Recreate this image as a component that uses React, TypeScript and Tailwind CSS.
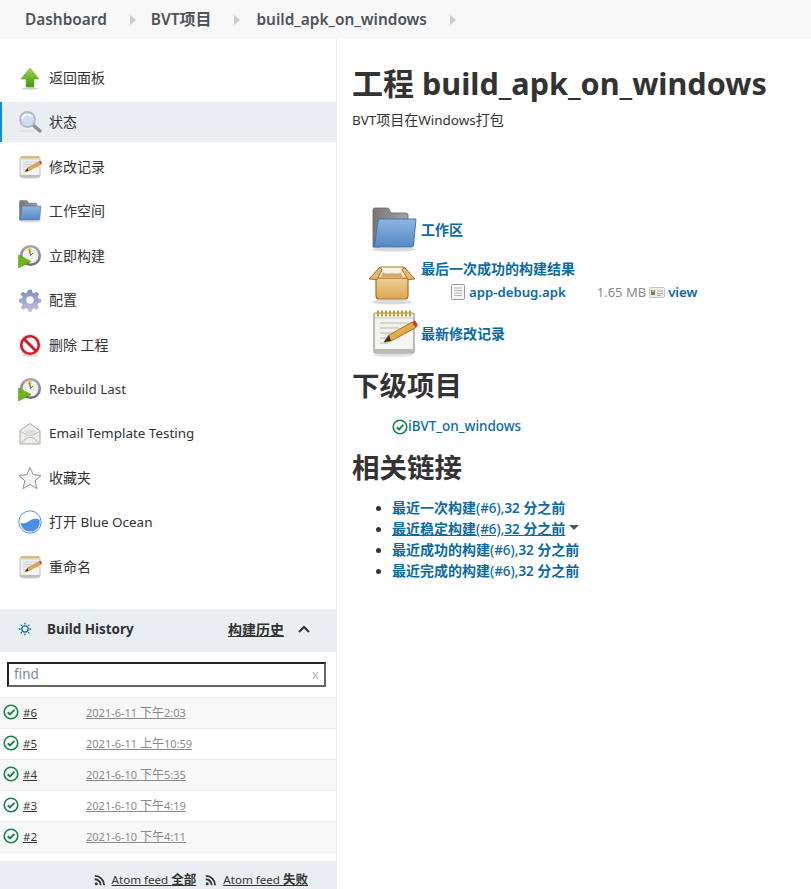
import React from "react";

const FONT = { fontFamily: '"Noto Sans","Noto Sans CJK SC",sans-serif' };

// Chinese runs are set at a slightly larger size than the Latin text around them.
function T({ s, cjk = "text-[14px]" }: { s: string; cjk?: string }) {
  const parts = s.split(/([\u4e00-\u9fff]+)/);
  return (
    <>
      {parts.map((p, i) => (i % 2 === 1 ? <span key={i} className={cjk}>{p}</span> : p))}
    </>
  );
}

function Arrow() {
  return (
    <svg viewBox="0 0 24 24" className="w-6 h-6">
      <defs><linearGradient id="ga" x1="0" y1="0" x2="0" y2="1"><stop offset="0" stopColor="#a5d25f" /><stop offset="1" stopColor="#3f9a06" /></linearGradient></defs>
      <ellipse cx="12" cy="22.5" rx="8" ry="1.2" fill="#ccc" />
      <path d="M12 2 L21 13 H16 V21 H8 V13 H3 Z" fill="url(#ga)" stroke="#6da82e" strokeWidth=".6" />
    </svg>
  );
}
function Search() {
  return (
    <svg viewBox="0 0 24 24" className="w-6 h-6">
      <ellipse cx="9" cy="21" rx="8" ry="1.5" fill="#e2e2e2" />
      <path d="M15 15 L22 21" stroke="#8d8f91" strokeWidth="3.4" strokeLinecap="round" />
      <circle cx="9.5" cy="9.5" r="7.5" fill="#cfdcf3" stroke="#b4b8bd" strokeWidth="1.8" />
      <path d="M4.5 9a5 5 0 0 1 9-2.5" stroke="#fff" strokeWidth="1.4" fill="none" />
    </svg>
  );
}
function Notepad({ size = 24 }: { size?: number }) {
  return (
    <svg viewBox="0 0 48 48" width={size} height={size}>
      <ellipse cx="24" cy="46" rx="20" ry="1.8" fill="#e2e2e2" />
      <rect x="4" y="4" width="40" height="40" rx="2" fill="#f3f3f0" stroke="#8a8a86" strokeWidth="1.1" />
      <rect x="4.5" y="40" width="39" height="3.6" fill="#b9b9b5" />
      <path d="M8 1.5v6M12 1.5v6M16 1.5v6M20 1.5v6M24 1.5v6M28 1.5v6M32 1.5v6M36 1.5v6M40 1.5v6" stroke="#bda12f" strokeWidth="2" />
      <rect x="5" y="8.5" width="38" height="1" fill="#c9c9c5" />
      <path d="M10 14h28M10 19h19M10 24h27M10 29h14M10 34h8" stroke="#b5b5b1" strokeWidth="1.2" />
      <path d="M14 33 L19 26 L42 13 L46 18.5 L21 32 Z" fill="#e5a94a" stroke="#8f6420" strokeWidth=".8" />
      <path d="M42 13 L46 18.5 L48 16 L45 11.5 Z" fill="#d8352a" />
      <path d="M14 33 L19 26 L21 32 Z" fill="#3c3026" />
    </svg>
  );
}
function Folder({ size = 24 }: { size?: number }) {
  const id = "gf" + size;
  return (
    <svg viewBox="0 0 48 48" width={size} height={size}>
      <defs>
        <linearGradient id={id} x1="0" y1="0" x2="0" y2="1"><stop offset="0" stopColor="#8fb5df" /><stop offset="1" stopColor="#5488c6" /></linearGradient>
        <linearGradient id={id + "b"} x1="0" y1="0" x2="1" y2="0"><stop offset="0" stopColor="#777" /><stop offset="1" stopColor="#a2a2a2" /></linearGradient>
      </defs>
      <ellipse cx="24" cy="44.5" rx="22" ry="2" fill="#d9d9d9" />
      <path d="M3 42 V5 Q3 3 5 3 H17 Q19 3 20 6 L21 8 H36 Q38 8 38 10 V16 L10 42 Z" fill={`url(#${id}b)`} stroke="#666" strokeWidth=".8" />
      <path d="M4 42 L8.5 14 H46 L43.5 41 Q43 42 41 42 Z" fill={`url(#${id})`} stroke="#3f6ea8" strokeWidth=".9" />
    </svg>
  );
}
function Clock({ uid }: { uid: string }) {
  return (
    <svg viewBox="0 0 24 24" className="w-6 h-6">
      <defs><linearGradient id={uid} x1="0" y1="0" x2="0" y2="1"><stop offset="0" stopColor="#aaa7ba" /><stop offset="1" stopColor="#6c6a80" /></linearGradient></defs>
      <circle cx="12.5" cy="11.5" r="10.6" fill={`url(#${uid})`} />
      <circle cx="12.5" cy="11.5" r="8" fill="#f3f1ea" />
      <path d="M12.5 11.5 L9 4.5 A8 8 0 0 1 14 3.7 Z" fill="#ecd166" />
      <path d="M12.5 11.5 L15 9 M12.5 11.5 L11.5 5.5" stroke="#555" strokeWidth=".9" />
      <path d="M0.5 11 L0.5 24 L13 17.5 Z" fill="#6cb61b" stroke="#4d8c10" strokeWidth=".5" />
    </svg>
  );
}
function Gear() {
  return (
    <svg viewBox="0 0 24 24" className="w-6 h-6">
      <defs><linearGradient id="gg" x1="0" y1="0" x2="0" y2="1"><stop offset="0" stopColor="#7a8dbc" /><stop offset="1" stopColor="#c4c1de" /></linearGradient></defs>
      <path d="M10 0.5h4l.6 3.3 2 .8 2.8-1.9 2.8 2.8-1.9 2.8.8 2 3 .6v4l-3 .6-.8 2 1.9 2.8-2.8 2.8-2.8-1.9-2 .8-.6 3h-4l-.6-3-2-.8-2.8 1.9-2.8-2.8 1.9-2.8-.8-2-3-.6v-4l3-.6.8-2L1.2 5.5 4 2.7l2.8 1.9 2-.8z" fill="url(#gg)" transform="translate(1.2 1.2) scale(.9)" />
      <circle cx="12" cy="12" r="3.8" fill="#fff" />
    </svg>
  );
}
function NoEntry() {
  return (
    <svg viewBox="0 0 24 24" className="w-6 h-6">
      <ellipse cx="12" cy="22.5" rx="8" ry="1.3" fill="#ddd" />
      <circle cx="12" cy="12" r="8.8" fill="#fff" stroke="#d01f26" strokeWidth="2.8" />
      <path d="M6 6 L18 18" stroke="#d01f26" strokeWidth="3" />
      <circle cx="12" cy="12" r="10.4" fill="none" stroke="#f0b0b0" strokeWidth=".5" />
    </svg>
  );
}
function Mail() {
  return (
    <svg viewBox="0 0 24 24" className="w-6 h-6">
      <path d="M2 8.5 L12 1.5 L22 8.5 V22 H2 Z" fill="#eeeeea" stroke="#a9a9a5" strokeWidth="1" />
      <path d="M2 9 L9 13 H15 L22 9" fill="none" stroke="#bdbdb9" strokeWidth="1" />
      <path d="M6 8 H18 L15 13 H9 Z" fill="#dcdcd8" />
      <path d="M2.5 21.5 L9 15.5 H15 L21.5 21.5" fill="none" stroke="#c3c3bf" strokeWidth="1.2" />
    </svg>
  );
}
function Star() {
  return (
    <svg viewBox="0 0 24 24" className="w-6 h-6">
      <path d="M12 1.5 L15.2 8.7 L23 9.5 L17.2 14.8 L18.9 22.6 L12 18.5 L5.1 22.6 L6.8 14.8 L1 9.5 L8.8 8.7 Z" fill="#f4f4f2" stroke="#8b8b8b" strokeWidth="1" strokeLinejoin="round" />
    </svg>
  );
}
function Ocean() {
  return (
    <svg viewBox="0 0 24 24" className="w-6 h-6">
      <circle cx="12" cy="12" r="11.2" fill="#fff" stroke="#5294e8" strokeWidth="1" />
      <path d="M2.6 12.5 C6 14.5 9 12.5 12 10.5 C15 8.5 18 8 21.4 9.5 A9.6 9.6 0 0 1 12 21.6 A9.6 9.6 0 0 1 2.6 12.5 Z" fill="#4a90e2" />
    </svg>
  );
}
function Box() {
  return (
    <svg viewBox="0 0 48 48" width="48" height="48">
      <defs><linearGradient id="gb" x1="0" y1="0" x2="0" y2="1"><stop offset="0" stopColor="#f0cf96" /><stop offset="1" stopColor="#dfa654" /></linearGradient></defs>
      <ellipse cx="24" cy="44" rx="20" ry="2.6" fill="#dadada" />
      <path d="M8 20 H40 V38 Q40 41 37 41 H11 Q8 41 8 38 Z" fill="url(#gb)" stroke="#a5701f" strokeWidth="1.2" />
      <path d="M12 9 H36 L44 20 H4 Z" fill="#fff3dc" stroke="#b07a2a" strokeWidth="1" />
      <path d="M12 9 L1 21 L9 21.5 L14 12 Z M36 9 L47 21 L40 21.5 L34 12 Z" fill="#e6b76e" stroke="#a5701f" strokeWidth="1" />
      <path d="M13 19 L16 12 H32 L35 19 Z" fill="#d9a862" />
      <ellipse cx="20" cy="13.5" rx="5" ry="2" fill="#f2f2ee" />
      <ellipse cx="28" cy="13.5" rx="5" ry="2" fill="#f2f2ee" />
    </svg>
  );
}
function Doc() {
  return (
    <svg viewBox="0 0 16 16" width="16" height="16">
      <rect x="1.5" y=".5" width="13" height="15" rx="1" fill="#f7f7f5" stroke="#9a9a9a" />
      <path d="M4 4h8M4 6.5h8M4 9h8M4 11.5h8" stroke="#b4b4b4" />
    </svg>
  );
}
function Card() {
  return (
    <svg viewBox="0 0 16 16" width="16" height="16">
      <rect x=".5" y="3.5" width="15" height="10" rx="1" fill="#ecece8" stroke="#c5c5c0" />
      <rect x="2" y="6" width="4" height="5" fill="#6f7f45" />
      <circle cx="4" cy="7" r="1.2" fill="#e0c090" />
      <path d="M8 7h6M8 9.5h6M8 11.5h4" stroke="#a8a8a4" />
    </svg>
  );
}
function Check({ size = 16 }: { size?: number }) {
  return (
    <svg viewBox="0 0 16 16" width={size} height={size} className="shrink-0">
      <circle cx="8" cy="8" r="6.8" fill="none" stroke="#138347" strokeWidth="1.6" />
      <path d="M4.7 8.2 L7 10.4 L11.4 5.9" fill="none" stroke="#138347" strokeWidth="2" />
    </svg>
  );
}
function Rss() {
  return (
    <svg viewBox="0 0 16 16" width="12" height="12" className="shrink-0">
      <circle cx="3" cy="13" r="2" fill="#333" />
      <path d="M1 7a8 8 0 0 1 8 8M1 2.5a12.5 12.5 0 0 1 12.5 12.5" fill="none" stroke="#333" strokeWidth="2.4" />
    </svg>
  );
}
function Tri() {
  return (
    <svg viewBox="0 0 6 10" width="6" height="10"><path d="M0 0 L6 5 L0 10 Z" fill="#c8ccce" /></svg>
  );
}

const tasks: [React.ReactNode, string, boolean?][] = [
  [<Arrow />, "返回面板"],
  [<Search />, "状态", true],
  [<Notepad />, "修改记录"],
  [<Folder />, "工作空间"],
  [<Clock uid="c1" />, "立即构建"],
  [<Gear />, "配置"],
  [<NoEntry />, "删除 工程"],
  [<Clock uid="c2" />, "Rebuild Last"],
  [<Mail />, "Email Template Testing"],
  [<Star />, "收藏夹"],
  [<Ocean />, "打开 Blue Ocean"],
  [<Notepad />, "重命名"],
];

const builds: [string, string][] = [
  ["#6", "2021-6-11 下午2:03"],
  ["#5", "2021-6-11 上午10:59"],
  ["#4", "2021-6-10 下午5:35"],
  ["#3", "2021-6-10 下午4:19"],
  ["#2", "2021-6-10 下午4:11"],
];

const links: [string, string, boolean?][] = [
  ["最近一次构建", "(#6),32 分之前"],
  ["最近稳定构建", "(#6),32 分之前", true],
  ["最近成功的构建", "(#6),32 分之前"],
  ["最近完成的构建", "(#6),32 分之前"],
];

export default function App() {
  return (
    <div style={FONT} className="w-[811px] h-[889px] overflow-hidden bg-white text-[#333] text-[13.45px] leading-[19px] flex flex-col">
      <nav className="h-[39px] shrink-0 bg-[#f8f8f8] flex items-center pl-[25px] text-[15.4px] font-semibold text-[#4d545d]">
        <span>Dashboard</span>
        <span className="ml-[23px] mr-[15px]"><Tri /></span>
        <span><T s="BVT项目" cjk="text-[16px]" /></span>
        <span className="ml-[23px] mr-[16px]"><Tri /></span>
        <span>build_apk_on_windows</span>
        <span className="ml-[23px]"><Tri /></span>
      </nav>
      <div className="flex flex-1 min-h-0">
        <aside className="w-[337px] shrink-0 border-r border-[#e9eef1] flex flex-col">
          <div className="pt-[19px] flex flex-col gap-[4.45px]">
            {tasks.map(([icon, label, active], i) => (
              <div key={i} className={`h-10 flex items-center pl-[16px] gap-[7px] border-l-2 text-[#333] ${active ? "bg-[#e9eef1] border-[#0b8de0]" : "border-transparent"}`}>
                <span className="w-6 h-6 shrink-0">{icon}</span>
                <span><T s={label} /></span>
              </div>
            ))}
          </div>
          <section className="mt-[22px]">
            <div className="h-[43px] pb-[2px] bg-[#e9eef1] flex items-center pl-[18px] pr-[26px]">
              <svg viewBox="0 0 16 16" width="14" height="14" className="shrink-0">
                <circle cx="8" cy="8" r="3.6" fill="none" stroke="#0f6ea6" strokeWidth="1.5" />
                <path d="M8 .8v2M8 13.2v2M1 8h2M13 8h2M3 3l1.4 1.4M11.6 11.6 13 13M13 3l-1.4 1.4M4.4 11.6 3 13" stroke="#0f6ea6" strokeWidth="1.5" />
              </svg>
              <span className="ml-[15px] font-bold text-[#333]">Build History</span>
              <a className="ml-auto font-bold underline text-[#333] text-[14px]">构建历史</a>
              <svg viewBox="0 0 12 8" width="12" height="8" className="ml-[14px]"><path d="M1 7 L6 2 L11 7" fill="none" stroke="#333" strokeWidth="2" /></svg>
            </div>
            <div className="pt-[10px] pb-[10px] pl-[7px] pr-[10px]">
              <div className="h-[25px] pt-[1px] flex items-center px-[5px] border-2 border-t-[#222] border-l-[#222] border-r-[#666] border-b-[#666] text-[13.5px] text-[#7b8a92]">
                <span>find</span>
                <span className="ml-auto text-[#b6b6b6] text-[13px]">x</span>
              </div>
            </div>
            <div className="border-t border-[#e9eef1]">
              {builds.map(([n, d], i) => (
                <div key={n} className={`h-[31px] pb-[1px] flex items-center pl-[3px] border-b border-[#e9eef1] text-[11px] ${i % 2 === 0 ? "bg-[#f8f8f8]" : "bg-white"}`}>
                  <Check />
                  <a className="ml-[4px] w-[63px] underline text-[#333] text-[11.5px]">{n}</a>
                  <a className="underline text-[#8a8a8a]"><T s={d} cjk="text-[12px]" /></a>
                </div>
              ))}
            </div>
            <div className="mt-[8px] h-[38px] bg-[#e9eef1] flex items-center justify-end pr-[28px] gap-[9px] text-[11.6px] text-[#333]">
              <span className="flex items-center gap-[6px]"><Rss /><a className="underline">Atom feed <b className="font-semibold text-[12.5px]">全部</b></a></span>
              <span className="flex items-center gap-[6px]"><Rss /><a className="underline">Atom feed <b className="font-semibold text-[12.5px]">失败</b></a></span>
            </div>
          </section>
        </aside>
        <main className="flex-1 min-w-0 pl-[15px]">
          <h1 className="mt-[22px] text-[30.6px] leading-[44px] font-bold text-[#333] whitespace-nowrap"><T s="工程 build_apk_on_windows" cjk="text-[31px]" /></h1>
          <p className="mt-[5px]"><T s="BVT项目在Windows打包" /></p>
          <div className="mt-[76px] flex flex-col gap-[4px] font-semibold text-[#0b6aa2]">
            <div className="flex items-center h-[48px] pb-[2px] pl-[18px] gap-[3px]"><Folder size={48} /><a className="text-[14px]">工作区</a></div>
            <div className="flex h-[48px] pl-[16px]">
              <span className="w-[48px]"><Box /></span>
              <div className="ml-[5px] pt-[0.5px]">
                <a className="block text-[14px]">最后一次成功的构建结果</a>
                <div className="flex items-center mt-[5px] ml-[29px] whitespace-nowrap text-[13.2px]">
                  <Doc />
                  <a className="ml-[3px]">app-debug.apk</a>
                  <span className="ml-[31px] font-normal text-[13px] text-[#8b8b8b]">1.65 MB</span>
                  <span className="ml-[3px]"><Card /></span>
                  <a className="ml-[3px]">view</a>
                </div>
              </div>
            </div>
            <div className="flex items-center h-[48px] pb-[2px] pl-[18px] gap-[3px]"><Notepad size={48} /><a className="text-[14px]">最新修改记录</a></div>
          </div>
          <h2 className="mt-[9px] text-[27.5px] leading-[38px] font-bold text-[#333]">下级项目</h2>
          <div className="mt-[12px] pl-[40px] flex items-center font-medium text-[#0b6aa2]"><Check /><a>iBVT_on_windows</a></div>
          <h2 className="mt-[13px] text-[27.5px] leading-[38px] font-bold text-[#333]">相关链接</h2>
          <ul className="mt-[10px] pl-[40px] list-disc font-semibold text-[#0b6aa2] leading-[21px] marker:text-[#333]">
            {links.map(([a, b, u], i) => (
              <li key={i} className="h-[21px]">
                <a className={u ? "underline" : ""}><span className="text-[14px]">{a}</span><span className="font-medium">{b.slice(0, 5)}</span><T s={b.slice(5)} /></a>
                {u && <svg viewBox="0 0 10 6" width="10" height="6" className="inline ml-[4px] mb-[4px]"><path d="M0 0 H10 L5 5 Z" fill="#555" /></svg>}
              </li>
            ))}
          </ul>
        </main>
      </div>
    </div>
  );
}
